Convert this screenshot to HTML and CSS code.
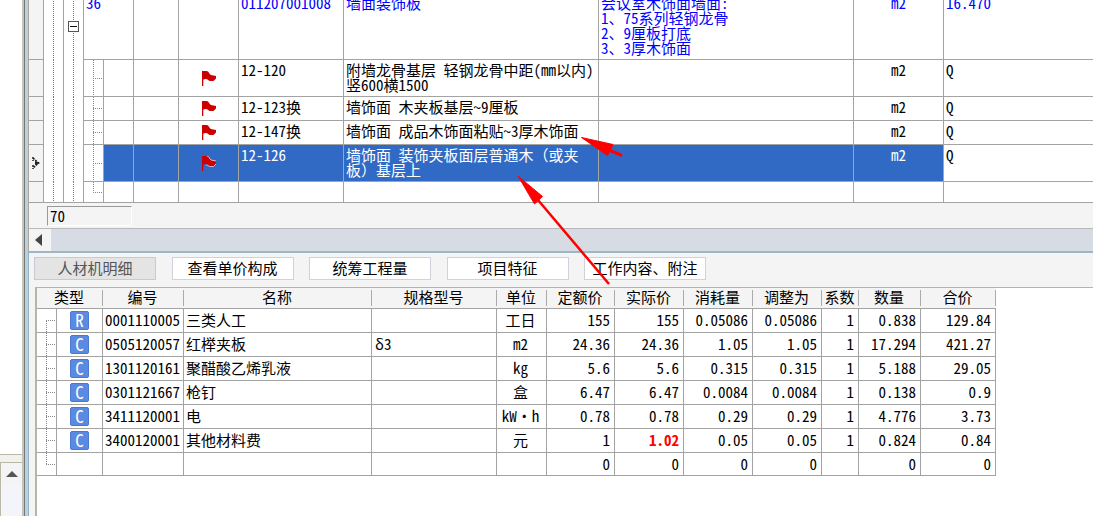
FILE: index.html
```html
<!DOCTYPE html>
<html lang="zh-CN">
<head>
<meta charset="utf-8">
<title>人材机明细</title>
<link rel="stylesheet" href="styles.css">
</head>
<body>
<svg class="defs" aria-hidden="true">
  <symbol id="flag" viewBox="0 0 14 15"><path d="M0 0H4.500C7 0 7 3 9 4L14 5V7.500L11.500 10H8.500C6.500 10 5.500 8 4 8L1.300 8.500V15H0Z" fill="#c00"/></symbol>
</svg>
<div class="app">
  <aside class="side">
    <div class="side-top"></div>
    <div class="side-bottom"><button class="up" aria-label="向上"><svg width="12" height="6" viewBox="0 0 12 6"><path d="M6 0 12 6H0Z" fill="#555"/></svg></button></div>
  </aside>
  <div class="splitter"></div>
  <main class="main">
    <section class="upper">
      <div class="viewport">
        <table class="items">
          <colgroup><col class="w15"><col class="w20"><col class="w20"><col class="w20"><col class="w30"><col class="w45"><col class="w60"><col class="w105"><col class="w255"><col class="w255"><col class="w90"><col></colgroup>
          <tbody>
            <tr class="parent"><td class="gutter"></td><td class="tree"></td><td class="tree node"><button class="fold" aria-label="折叠"></button></td><td colspan="2">36</td><td></td><td></td><td>011207001008</td><td>墙面装饰板</td><td>会议室木饰面墙面:<br>1、75系列轻钢龙骨<br>2、9厘板打底<br>3、3厚木饰面</td><td class="mid">m2</td><td>16.470</td></tr>
            <tr class="tall"><td class="gutter"></td><td class="tree"></td><td class="tree"></td><td class="leaf"></td><td></td><td></td><td class="icon"><svg width="14" height="15"><use href="#flag"/></svg></td><td>12-120</td><td>附墙龙骨基层 轻钢龙骨中距(mm以内)<br>竖600横1500</td><td></td><td class="mid">m2</td><td>Q</td></tr>
            <tr><td class="gutter"></td><td class="tree"></td><td class="tree"></td><td class="leaf"></td><td></td><td></td><td class="icon"><svg width="14" height="15"><use href="#flag"/></svg></td><td>12-123换</td><td>墙饰面 木夹板基层~9厘板</td><td></td><td class="mid">m2</td><td>Q</td></tr>
            <tr><td class="gutter"></td><td class="tree"></td><td class="tree"></td><td class="leaf"></td><td></td><td></td><td class="icon"><svg width="14" height="15"><use href="#flag"/></svg></td><td>12-147换</td><td>墙饰面 成品木饰面粘贴~3厚木饰面</td><td></td><td class="mid">m2</td><td>Q</td></tr>
            <tr class="tall selected"><td class="gutter icon"><svg width="8" height="12" viewBox="0 0 8 12"><path d="M1 0v4M1 8v4M1 1 6.500 6 1 11" fill="none" stroke="#222" stroke-width="1.500" stroke-dasharray="2 1"/><path d="M3 4 8 6 3 8Z" fill="#222"/></svg></td><td class="tree"></td><td class="tree"></td><td class="leaf"></td><td></td><td></td><td class="icon"><svg width="14" height="15"><use href="#flag"/><path d="M5 0C7.500 0 7 3 9 4L14 5M4 9C6 9 6.500 10.500 8.500 10.500H11.500L14 8" fill="none" stroke="#e5b5b5"/></svg></td><td>12-126</td><td>墙饰面 装饰夹板面层普通木<span class="full">（</span>或夹<br>板<span class="full">）</span>基层上</td><td></td><td class="mid">m2</td><td>Q</td></tr>
            <tr class="blank"><td class="gutter"></td><td class="tree"></td><td class="tree"></td><td class="leaf end"></td><td></td><td></td><td></td><td></td><td></td><td></td><td></td><td></td></tr>
          </tbody>
        </table>
      </div>
      <div class="footer"><input class="count" type="text" value="70" aria-label="数量" readonly></div>
      <div class="hscroll"><button class="left" aria-label="向左"><svg width="7" height="12" viewBox="0 0 7 12"><path d="M7 0V12L0 6Z" fill="#444"/></svg></button></div>
    </section>
    <section class="lower">
      <nav class="tabs">
        <button class="tab active">人材机明细</button>
        <button class="tab">查看单价构成</button>
        <button class="tab">统筹工程量</button>
        <button class="tab">项目特征</button>
        <button class="tab">工作内容、附注</button>
      </nav>
      <div class="sheet">
        <table class="detail">
          <colgroup><col class="w20"><col class="w46"><col class="w81"><col class="w188"><col class="w125"><col class="w50"><col class="w68"><col class="w69"><col class="w69"><col class="w69"><col class="w37"><col class="w62"><col class="w75"></colgroup>
          <thead><tr><th colspan="2">类型</th><th>编号</th><th>名称</th><th>规格型号</th><th>单位</th><th>定额价</th><th>实际价</th><th>消耗量</th><th>调整为</th><th>系数</th><th>数量</th><th>合价</th></tr></thead>
          <tbody>
            <tr><td class="leaf start"></td><td class="type"><span class="badge">R</span></td><td class="code">0001110005</td><td>三类人工</td><td></td><td class="mid">工日</td><td class="num">155</td><td class="num">155</td><td class="num">0.05086</td><td class="num">0.05086</td><td class="num">1</td><td class="num">0.838</td><td class="num">129.84</td></tr>
            <tr><td class="leaf"></td><td class="type"><span class="badge">C</span></td><td class="code">0505120057</td><td>红榉夹板</td><td class="spec"><span class="full">δ</span>3</td><td class="mid">m2</td><td class="num">24.36</td><td class="num">24.36</td><td class="num">1.05</td><td class="num">1.05</td><td class="num">1</td><td class="num">17.294</td><td class="num">421.27</td></tr>
            <tr><td class="leaf"></td><td class="type"><span class="badge">C</span></td><td class="code">1301120161</td><td>聚醋酸乙烯乳液</td><td></td><td class="mid">kg</td><td class="num">5.6</td><td class="num">5.6</td><td class="num">0.315</td><td class="num">0.315</td><td class="num">1</td><td class="num">5.188</td><td class="num">29.05</td></tr>
            <tr><td class="leaf"></td><td class="type"><span class="badge">C</span></td><td class="code">0301121667</td><td>枪钉</td><td></td><td class="mid">盒</td><td class="num">6.47</td><td class="num">6.47</td><td class="num">0.0084</td><td class="num">0.0084</td><td class="num">1</td><td class="num">0.138</td><td class="num">0.9</td></tr>
            <tr><td class="leaf"></td><td class="type"><span class="badge">C</span></td><td class="code">3411120001</td><td>电</td><td></td><td class="mid">kW·h</td><td class="num">0.78</td><td class="num">0.78</td><td class="num">0.29</td><td class="num">0.29</td><td class="num">1</td><td class="num">4.776</td><td class="num">3.73</td></tr>
            <tr><td class="leaf"></td><td class="type"><span class="badge">C</span></td><td class="code">3400120001</td><td>其他材料费</td><td></td><td class="mid">元</td><td class="num">1</td><td class="num changed">1.02</td><td class="num">0.05</td><td class="num">0.05</td><td class="num">1</td><td class="num">0.824</td><td class="num">0.84</td></tr>
            <tr class="last"><td class="leaf end"></td><td></td><td></td><td></td><td></td><td></td><td class="num">0</td><td class="num">0</td><td class="num">0</td><td class="num">0</td><td></td><td class="num">0</td><td class="num">0</td></tr>
          </tbody>
        </table>
      </div>
    </section>
  </main>
  <svg class="arrows" width="110" height="150" viewBox="514 136 110 150" aria-hidden="true">
    <g fill="#f00" stroke="#f00">
      <path d="M581.500 137.500 613 144.500 611 149 607.500 155.500Z"/>
      <path d="M609 150 622 155.500" stroke-width="3"/>
      <path d="M518 176 542.500 196.500 534.500 204Z"/>
      <path d="M538 200 609 284" stroke-width="2.500"/>
    </g>
  </svg>
</div>
</body>
</html>
```
FILE: styles.css
```css
* { box-sizing: border-box; }
body {
  margin: 0;
  background: #fff;
  color: #000;
  font: 15px/15px "Noto Sans CJK SC", sans-serif;
  font-feature-settings: "hwid";
}
button, input { font: inherit; font-feature-settings: inherit; color: inherit; border-radius: 0; }
.defs { display: none; }
.full { font-feature-settings: "fwid"; }
.app { position: relative; display: flex; height: 100vh; overflow: hidden; }

.side { flex: none; width: 22px; display: flex; flex-direction: column; gap: 7px; background: #f1f1ef; }
.side-top { flex: 1; background: #fff; border-bottom: 1px solid #bcb8a8; }
.side-bottom { height: 54px; background: #f3f5fb; border: 1px solid #bcb8a8; border-width: 1px 0 0 1px; }
.up { display: flex; width: 100%; height: 22px; border: 0; padding: 0; background: #f4f4f4; align-items: center; justify-content: center; }
.splitter { flex: none; width: 6px; background: linear-gradient(to right, #c6c4bc 0 2px, #70787b 2px 3px, #bdd0d7 3px 6px); }

.main { flex: 1; min-width: 0; display: flex; flex-direction: column; }
.upper { border-left: 1px solid #a9a69d; }
.viewport { overflow: hidden; }
table { border-collapse: separate; border-spacing: 0; table-layout: fixed; }
td { padding: 0 4px 2px 2px; border: 1px solid #a3a3a3; border-width: 0 1px 1px 0; white-space: nowrap; }
.mid { text-align: center; }

.items { width: 100%; margin-top: -7px; }
.items tr { height: 24px; }
.items .tall { height: 37px; }
.items .parent { height: 67px; color: #00f; }
.items .blank { height: 21px; }
.items td { padding: 2px 2px 0; vertical-align: top; }
.items td:last-child { border-right: 0; }
.items .icon { padding: 0; text-align: center; vertical-align: middle; }
.icon svg { display: block; margin: 0 auto; }
.items .gutter { background: #f4f4f4; }
.selected td { background-color: #316ac5; color: #fff; }
.selected td.tree, .selected td.leaf, .selected td:last-child { background-color: #fff; color: #000; }
.items .tree {
  padding: 0;
  border-bottom: 0;
  background-image: repeating-linear-gradient(#777 0 1px, transparent 1px 2px);
  background-size: 1px 100%;
  background-position: 9px 0;
  background-repeat: no-repeat;
}
.items .blank .tree { border-bottom: 1px solid #a3a3a3; }
.items .node { vertical-align: middle; }
.fold {
  display: block;
  width: 11px;
  height: 11px;
  margin: 0 4px;
  padding: 0;
  border: 1px solid #555;
  background: linear-gradient(#111, #111) center / 7px 1px no-repeat #fff;
}
.leaf {
  background-image:
    repeating-linear-gradient(#888 0 1px, transparent 1px 2px),
    repeating-linear-gradient(to right, #888 0 1px, transparent 1px 2px);
  background-size: 1px 100%, 9px 1px;
  background-position: 9px 0, 9px 50%;
  background-repeat: no-repeat;
}
.leaf.end { background-size: 1px 50%, 9px 1px; }
.leaf.start { background-size: 1px 50%, 9px 1px; background-position: 9px 100%, 9px 50%; }

.footer { height: 25px; padding: 3px 0 2px 18px; background: #f4f4f4; }
.count { display: block; width: 85px; height: 20px; padding: 0 2px 2px; border: 1px solid; border-color: #999 #fff #fff #999; background: #f4f4f4; outline: 0; }
.hscroll { height: 23px; border-top: 1px solid #b9b9b9; background: #d7dbe4; }
.left { display: flex; width: 22px; height: 22px; padding: 0 4px 0 0; border: 0; background: #f4f4f4; align-items: center; justify-content: center; }

.lower { flex: 1; display: flex; flex-direction: column; border-top: 2px solid #9db8c4; border-left: 1px solid #8fb3c8; background: #f4f4f4; }
.tabs { display: grid; grid-template-columns: repeat(5, 122px); justify-content: space-between; width: 677px; padding: 4px 0 7px 5px; }
.tab { height: 23px; padding: 0 0 2px; border: 1px solid #cdd2dc; background: #fff; white-space: nowrap; }
.tab.active { background: #e4e4e4; border-color: #c6cbd2; color: #555; }
.sheet { flex: 1; margin-left: 6px; border: 1px solid #b8b5a8; border-width: 1px 0 0 2px; background: #fff; }
.detail { width: 959px; }
.detail tr { height: 24px; }
.detail thead tr { height: 21px; }
.detail .last { height: 23px; }
th {
  padding: 0 2px 3px 0;
  font-weight: 400;
  border-bottom: 1px solid #a3a3a3;
  background: linear-gradient(#aaa, #aaa) right center / 1px 16px no-repeat #f4f4f4;
}
.num { text-align: right; }
.detail .code { padding-right: 2px; }
.detail .type { padding: 0; }
.detail .spec { padding-left: 3px; }
.changed { color: #f00; font-weight: 700; }
.badge {
  display: block;
  width: 19px;
  height: 19px;
  margin: 0 auto;
  border: 1px solid #4a78cf;
  border-radius: 2px;
  background: #5a8ae2;
  color: #fff;
  font-size: 17px;
  line-height: 16px;
  text-align: center;
}

.w15 { width: 15px; } .w20 { width: 20px; } .w30 { width: 30px; } .w37 { width: 37px; }
.w45 { width: 45px; } .w46 { width: 46px; } .w50 { width: 50px; } .w60 { width: 60px; }
.w62 { width: 62px; } .w68 { width: 68px; } .w69 { width: 69px; } .w75 { width: 75px; }
.w81 { width: 81px; } .w90 { width: 90px; } .w105 { width: 105px; } .w125 { width: 125px; }
.w188 { width: 188px; } .w255 { width: 255px; }

.arrows { position: absolute; left: 514px; top: 136px; pointer-events: none; }
```
